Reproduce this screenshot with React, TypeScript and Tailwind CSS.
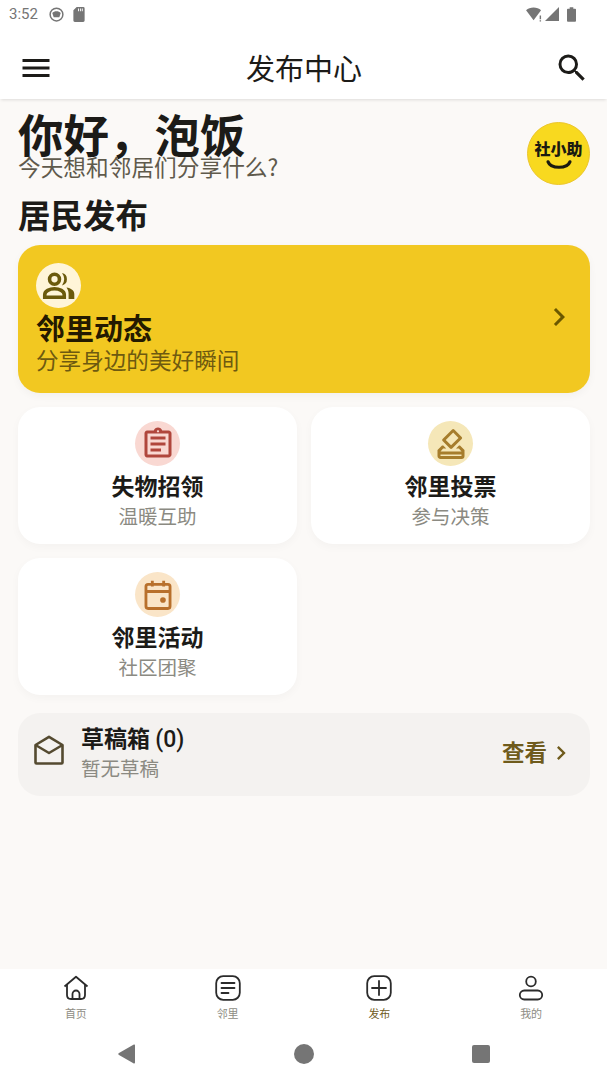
import { MdChevronRight, MdMenu, MdOutlineAssignment, MdOutlineHowToVote, MdSearch } from 'react-icons/md';

function PeopleIcon() {
  return (
    <svg viewBox="0 0 24 24" className="h-[36px] w-[36px] text-[#6b5a0c]" fill="none" stroke="currentColor" strokeWidth="2.400">
      <circle cx="9" cy="7.500" r="3.300" />
      <path d="M2.500 19.500v-1.700c0-2.400 3.200-4 6.500-4s6.500 1.600 6.500 4v1.700z" />
      <path d="M14 3.400a4.200 4.200 0 0 1 0 8.200 7 7 0 0 0 0-8.200z" fill="currentColor" stroke="none" />
      <path d="M17 13c3 .5 5.200 2 5.200 4.300v3.400h-3.800v-3.400c0-1.700-.5-3.100-1.400-4.300z" fill="currentColor" stroke="none" />
    </svg>
  );
}

function CalendarIcon() {
  return (
    <svg viewBox="0 0 24 24" className="h-[34px] w-[34px] text-[#b8702c]" fill="none" stroke="currentColor" strokeWidth="2">
      <rect x="3.500" y="4.500" width="17" height="17" rx="1.500" />
      <path d="M3.500 9.500h17M8 2v4M16 2v4" />
      <circle cx="15.500" cy="15.500" r="2" fill="currentColor" stroke="none" />
    </svg>
  );
}

function DraftsIcon() {
  return (
    <svg viewBox="0 0 30 30" className="mb-[9px] h-[30px] w-[30px] text-[#544a30]" fill="none" stroke="currentColor" strokeWidth="2.600" strokeLinejoin="round">
      <path d="M1.500 10 15 1.800 28.500 10v17.500a1 1 0 0 1-1 1h-25a1 1 0 0 1-1-1z" />
      <path d="M1.500 10 15 18l13.500-8" />
    </svg>
  );
}

function HomeIcon() {
  return (
    <svg viewBox="0 0 26 26" className="h-[26px] w-[26px]" fill="none" stroke="#2b2b2b" strokeWidth="1.800" strokeLinejoin="round">
      <path d="M1.500 11.500 13 1.800l11.500 9.700" />
      <path d="M4 9.500v10.500c0 2.500 1.500 4 4 4h10c2.500 0 4-1.500 4-4V9.500" />
      <path d="M9.500 24v-5a3.500 3.500 0 0 1 7 0v5" />
    </svg>
  );
}

function NeighborIcon() {
  return (
    <svg viewBox="0 0 26 26" className="h-[26px] w-[26px]" fill="none" stroke="#2b2b2b" strokeWidth="1.800" strokeLinecap="round">
      <rect x="1.200" y="1.200" width="23.600" height="23.600" rx="7" />
      <path d="M6.500 8h13M6.500 13h13M6.500 18h7" />
    </svg>
  );
}

function PublishIcon() {
  return (
    <svg viewBox="0 0 26 26" className="h-[26px] w-[26px]" fill="none" stroke="#2b2b2b" strokeWidth="1.800" strokeLinecap="round">
      <rect x="1.200" y="1.200" width="23.600" height="23.600" rx="7" />
      <path d="M13 6v14M6 13h14" />
    </svg>
  );
}

function ProfileIcon() {
  return (
    <svg viewBox="0 0 26 26" className="h-[26px] w-[26px]" fill="none" stroke="#2b2b2b" strokeWidth="1.800">
      <circle cx="13" cy="6.500" r="4.800" />
      <rect x="1.800" y="15.500" width="22.400" height="9" rx="4.500" />
    </svg>
  );
}

const services = [
  {
    title: '失物招领',
    desc: '温暖互助',
    bg: 'bg-[#f9d8d2]',
    icon: <MdOutlineAssignment className="h-[36px] w-[36px] text-[#b0463c]" />,
  },
  {
    title: '邻里投票',
    desc: '参与决策',
    bg: 'bg-[#f5e7b8]',
    icon: <MdOutlineHowToVote className="h-[36px] w-[36px] text-[#a67d2c]" />,
  },
  {
    title: '邻里活动',
    desc: '社区团聚',
    bg: 'bg-[#fae5c8]',
    icon: <CalendarIcon />,
  },
];

const tabs = [
  { label: '首页', icon: <HomeIcon />, active: false },
  { label: '邻里', icon: <NeighborIcon />, active: false },
  { label: '发布', icon: <PublishIcon />, active: true },
  { label: '我的', icon: <ProfileIcon />, active: false },
];

export default function App() {
  return (
    <div className="flex h-[1080px] w-[607px] flex-col overflow-hidden bg-[#fbf9f7] font-['Noto_Sans_CJK_SC','Noto_Sans',sans-serif] text-[#1c1b18]">
      {/* status bar */}
      <div className="flex h-[36px] shrink-0 items-center justify-between bg-white pb-[8px] pl-[9px] pr-[31px]">
        <div className="flex items-center gap-[9px]">
          <span className="font-['Roboto',sans-serif] text-[15px] text-[#757575]">3:52</span>
          <svg viewBox="0 0 16 16" className="ml-[2px] h-[15px] w-[15px]" fill="none" stroke="#757575" strokeWidth="1.600">
            <circle cx="8" cy="8" r="6.800" />
            <path d="M3.500 6.500c2-2.500 7-2.500 9 0L11 11H5z" fill="#757575" stroke="none" />
          </svg>
          <svg viewBox="0 0 12 16" className="h-[15px] w-[12px]" fill="#757575">
            <path d="M3.500 0H10.500a1.500 1.500 0 0 1 1.500 1.500v13a1.500 1.500 0 0 1-1.500 1.500h-9A1.500 1.500 0 0 1 0 14.500V3.500zM5 1.500v3h1v-3zm2 0v3h1v-3zm2 0v3h1v-3z" />
          </svg>
        </div>
        <div className="flex items-center gap-[2px]">
          <svg viewBox="0 0 18 16" className="h-[15px] w-[17px]" fill="#757575">
            <path d="M0 3.500C4-.5 12-.5 16 3.500L8 14z" />
            <path d="M14.500 9h1.500v4h-1.500zm0 5h1.500v1.500h-1.500z" />
          </svg>
          <svg viewBox="0 0 14 14" className="h-[14px] w-[14px]" fill="#757575">
            <path d="M14 0v14H0z" />
          </svg>
          <svg viewBox="0 0 10 16" className="ml-[6px] h-[15px] w-[9px]" fill="#757575">
            <path d="M3 0h4v1.500h2a1 1 0 0 1 1 1V15a1 1 0 0 1-1 1H1a1 1 0 0 1-1-1V2.500a1 1 0 0 1 1-1h2z" />
          </svg>
        </div>
      </div>

      {/* header */}
      <div className="z-10 flex h-[63px] shrink-0 items-center justify-between bg-white pl-[18px] pr-[17px] shadow-[0_2px_3px_-1px_rgba(0,0,0,0.12)]">
        <MdMenu className="h-[36px] w-[36px] text-[#1c1b18]" />
        <h1 className="text-[29px] font-normal leading-none">发布中心</h1>
        <MdSearch className="h-[36px] w-[36px] text-[#1c1b18]" />
      </div>

      {/* content */}
      <main className="min-h-0 flex-1 pl-[18px] pr-[17px] pt-[9px]">
        <div className="flex items-start justify-between">
          <div>
            <div className="text-[45.500px] font-bold leading-[50px]">{'你好\uFF0C泡饭'}</div>
            <p className="mt-[-6px] text-[22.700px] leading-[30px] text-[#5f5a4c]">今天想和邻居们分享什么?</p>
          </div>
          <div className="mt-[14px] flex h-[63px] w-[63px] flex-col items-center justify-center rounded-full border border-[#ecc62e] bg-[#f8d91f]">
            <span className="text-[16px] font-black leading-[20px] text-[#1a1a10]">社小助</span>
            <svg viewBox="0 0 28 11" className="mt-[2px] h-[10px] w-[26px]" fill="none" stroke="#1a1a10" strokeWidth="3.500" strokeLinecap="round">
              <path d="M2 2c3 8 21 8 24 0" />
            </svg>
          </div>
        </div>

        <h2 className="mt-[9px] text-[32.500px] font-bold leading-[40px]">居民发布</h2>

        {/* featured card */}
        <div className="mt-[11px] flex h-[148px] items-center justify-between rounded-[22px] bg-[#f2c821] pl-[18px] pr-[13px] shadow-[0_3px_8px_rgba(0,0,0,0.04)]">
          <div>
            <div className="flex h-[45px] w-[45px] items-center justify-center rounded-full bg-[#fff5d8]">
              <PeopleIcon />
            </div>
            <div className="mt-[3px] text-[29px] font-bold leading-[32px] text-[#241a00]">邻里动态</div>
            <div className="mt-[2px] text-[22.600px] leading-[30px] text-[#6e5a10]">分享身边的美好瞬间</div>
          </div>
          <MdChevronRight className="mt-[-5px] h-[36px] w-[36px] text-[#6b5800]" />
        </div>

        {/* service cards */}
        <div className="mt-[14px] grid grid-cols-2 gap-[14px]">
          {services.map((item) => (
            <div key={item.title} className="flex h-[137px] flex-col items-center rounded-[22px] bg-white pt-[14px] shadow-[0_3px_10px_rgba(0,0,0,0.03)]">
              <div className={`flex h-[45px] w-[45px] items-center justify-center rounded-full ${item.bg}`}>{item.icon}</div>
              <div className="mt-[4px] text-[23px] font-bold leading-[30px]">{item.title}</div>
              <div className="mt-[1px] text-[19.500px] leading-[30px] text-[#8b8a82]">{item.desc}</div>
            </div>
          ))}
        </div>

        {/* drafts */}
        <div className="mt-[18px] flex h-[83px] items-center justify-between rounded-[22px] bg-[#f4f2f0] pl-[16px] pr-[15px]">
          <div className="flex items-center gap-[17px]">
            <DraftsIcon />
            <div className="pb-[7px]">
              <div className="mt-[2px] text-[23px] font-bold leading-[30px]">
                草稿箱 <span className="font-['Roboto',sans-serif] font-medium">(0)</span>
              </div>
              <div className="mt-[-1px] text-[19.500px] leading-[28px] text-[#8b8a82]">暂无草稿</div>
            </div>
          </div>
          <div className="flex items-center pb-[5px] text-[22.500px] font-bold text-[#6f5b1c]">
            查看
            <MdChevronRight className="mt-[1px] h-[28px] w-[28px]" />
          </div>
        </div>
      </main>

      {/* bottom tabs */}
      <nav className="grid h-[63px] shrink-0 grid-cols-4 bg-white pt-[6px]">
        {tabs.map((tab) => (
          <div key={tab.label} className="flex flex-col items-center">
            {tab.icon}
            <span className={`mt-[4px] text-[11px] leading-[16px] ${tab.active ? 'text-[#6f5b1c]' : 'text-[#8e8d84]'}`}>{tab.label}</span>
          </div>
        ))}
      </nav>

      {/* system nav */}
      <div className="flex h-[48px] shrink-0 items-center justify-center gap-[158px] bg-white pb-[4px]">
        <svg viewBox="0 0 18 20" className="h-[20px] w-[18px]" fill="#757575">
          <path d="M17 1.500v17a1 1 0 0 1-1.600.800L1 11a1.200 1.200 0 0 1 0-2L15.400.700A1 1 0 0 1 17 1.500z" />
        </svg>
        <div className="h-[20px] w-[20px] rounded-full bg-[#757575]" />
        <div className="h-[18px] w-[18px] rounded-[2px] bg-[#757575]" />
      </div>
    </div>
  );
}
